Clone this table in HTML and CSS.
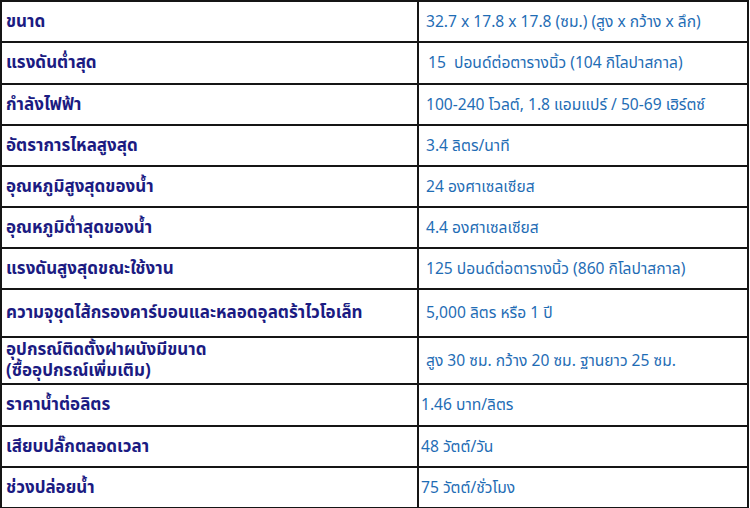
FILE: index.html
```html
<!DOCTYPE html>
<html lang="th">
<head>
<meta charset="utf-8">
<title>ข้อมูลจำเพาะ</title>
<link rel="stylesheet" href="styles.css">
</head>
<body>
<table class="spec">
  <tr class="r41"><th>ขนาด</th><td>32.7 x 17.8 x 17.8 (ซม.) (สูง x กว้าง x ลึก)</td></tr>
  <tr class="r42"><th>แรงดันต่ำสุด</th><td class="ind2">15&nbsp; ปอนด์ต่อตารางนิ้ว (104 กิโลปาสกาล)</td></tr>
  <tr class="r41"><th>กำลังไฟฟ้า</th><td>100-240 โวลต์, 1.8 แอมแปร์ / 50-69 เฮิร์ตซ์</td></tr>
  <tr class="r41"><th>อัตราการไหลสูงสุด</th><td>3.4 ลิตร/นาที</td></tr>
  <tr class="r41"><th>อุณหภูมิสูงสุดของน้ำ</th><td>24 องศาเซลเซียส</td></tr>
  <tr class="r41"><th>อุณหภูมิต่ำสุดของน้ำ</th><td>4.4 องศาเซลเซียส</td></tr>
  <tr class="r41"><th>แรงดันสูงสุดขณะใช้งาน</th><td>125 ปอนด์ต่อตารางนิ้ว (860 กิโลปาสกาล)</td></tr>
  <tr class="r48"><th>ความจุชุดไส้กรองคาร์บอนและหลอดอุลตร้าไวโอเล็ท</th><td>5,000 ลิตร หรือ 1 ปี</td></tr>
  <tr class="r47"><th class="two">อุปกรณ์ติดตั้งฝาผนังมีขนาด<br>(ซื้ออุปกรณ์เพิ่มเติม)</th><td>สูง 30 ซม. กว้าง 20 ซม. ฐานยาว 25 ซม.</td></tr>
  <tr class="r42"><th>ราคาน้ำต่อลิตร</th><td class="ind0">1.46 บาท/ลิตร</td></tr>
  <tr class="r41"><th>เสียบปลั๊กตลอดเวลา</th><td class="ind0">48 วัตต์/วัน</td></tr>
  <tr class="r41"><th>ช่วงปล่อยน้ำ</th><td class="ind0">75 วัตต์/ชั่วโมง</td></tr>
</table>
</body>
</html>
```
FILE: styles.css
```css
html, body {
  margin: 0;
  padding: 0;
  background: #ffffff;
}

.spec {
  border-collapse: collapse;
  width: 749px;
  table-layout: fixed;
  font-family: "Noto Sans Thai", "Leelawadee UI", Tahoma, "Noto Sans", sans-serif;
}

.spec th,
.spec td {
  border: 2px solid #151515;
  vertical-align: middle;
  padding: 0;
  box-sizing: border-box;
}

.spec th {
  width: 417px;
  text-align: left;
  font-weight: 700;
  font-size: 17px;
  line-height: 22px;
  color: #1b1b82;
  padding-left: 4px;
}

.spec th.two {
  line-height: 21px;
  padding-top: 1px;
}

.spec td {
  font-size: 15.6px;
  line-height: 20px;
  color: #1f6db5;
  padding-left: 7px;
}

.spec td.ind2 {
  padding-left: 9px;
}

.spec td.ind0 {
  padding-left: 2px;
}

.r41 { height: 41px; }
.r42 { height: 42px; }
.r47 { height: 47px; }
.r48 { height: 48px; }
```
